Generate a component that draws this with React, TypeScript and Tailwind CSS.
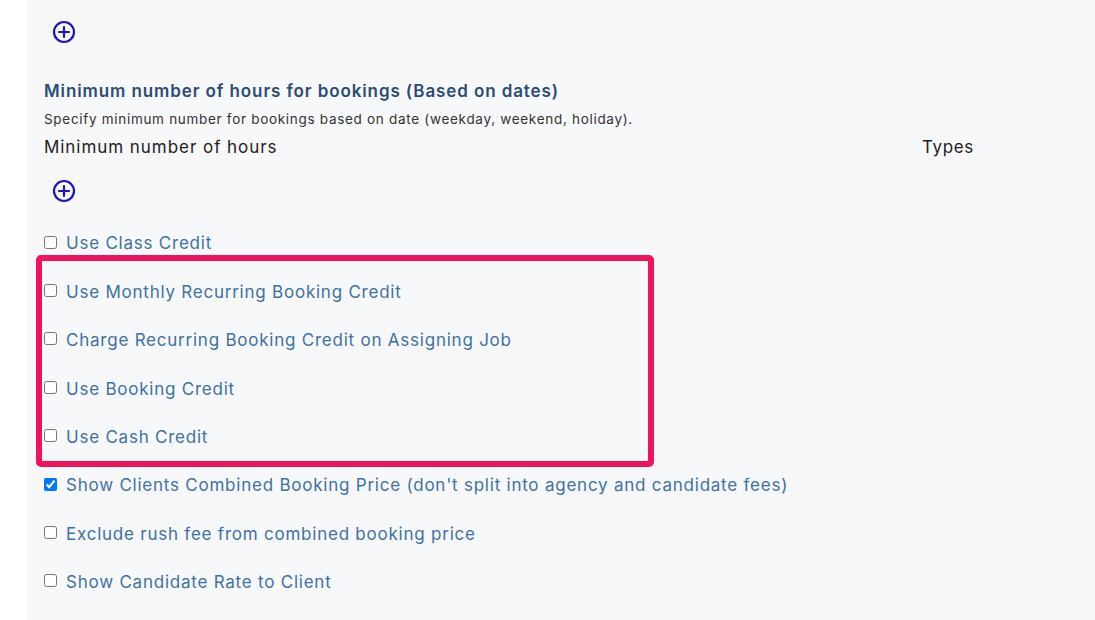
import React from "react";

const PlusIcon = () => (
  <svg width="24" height="24" viewBox="0 0 24 24" fill="none">
    <circle cx="12" cy="12" r="10" stroke="#1a17b8" strokeWidth="2.2" />
    <path d="M12 7v10M7 12h10" stroke="#1a17b8" strokeWidth="2.2" strokeLinecap="round" />
  </svg>
);

const rows: { label: string; checked?: boolean }[] = [
  { label: "Use Class Credit" },
  { label: "Use Monthly Recurring Booking Credit" },
  { label: "Charge Recurring Booking Credit on Assigning Job" },
  { label: "Use Booking Credit" },
  { label: "Use Cash Credit" },
  { label: "Show Clients Combined Booking Price (don't split into agency and candidate fees)", checked: true },
  { label: "Exclude rush fee from combined booking price" },
  { label: "Show Candidate Rate to Client" },
];

export default function App() {
  return (
    <div
      className="flex w-full h-[620px] bg-white overflow-hidden"
      style={{ fontFamily: "Inter, 'Noto Sans', sans-serif" }}
    >
      <div className="w-[27px] shrink-0" />
      <div className="flex-1 bg-[#f7f8fa] pl-[17px] flex flex-col">
        <div className="h-[64px] flex items-center pl-[8px]">
          <PlusIcon />
        </div>
        <div className="mt-[16px] h-[24px] flex items-center text-[17px] font-semibold tracking-[0.9px] text-[#2b4d73]">
          Minimum number of hours for bookings (Based on dates)
        </div>
        <div className="mt-[5px] h-[20px] flex items-center text-[13.5px] tracking-[0.7px] text-[#333333]">
          Specify minimum number for bookings based on date (weekday, weekend, holiday).
        </div>
        <div className="mt-[7px] h-[24px] flex items-center text-[17px] tracking-[0.95px] text-[#222222]">
          <div className="w-[878px]">Minimum number of hours</div>
          <div className="tracking-[0.6px]">Types</div>
        </div>
        <div className="mt-[18px] h-[26px] flex items-center pl-[8px]">
          <PlusIcon />
        </div>
        <div className="relative mt-[16px]">
          {rows.map((r) => (
            <label key={r.label} className="h-[48.4px] flex items-center">
              <input
                type="checkbox"
                defaultChecked={r.checked}
                className="w-[13px] h-[13px] shrink-0 -mt-[4px]"
              />
              <span className="ml-[9px] text-[17px] tracking-[0.77px] text-[#3e72a4]">{r.label}</span>
            </label>
          ))}
          <div className="absolute left-[-8px] top-[35px] w-[618px] h-[212px] border-[6px] border-[#f0155a] rounded-[5px] pointer-events-none" />
        </div>
      </div>
    </div>
  );
}
